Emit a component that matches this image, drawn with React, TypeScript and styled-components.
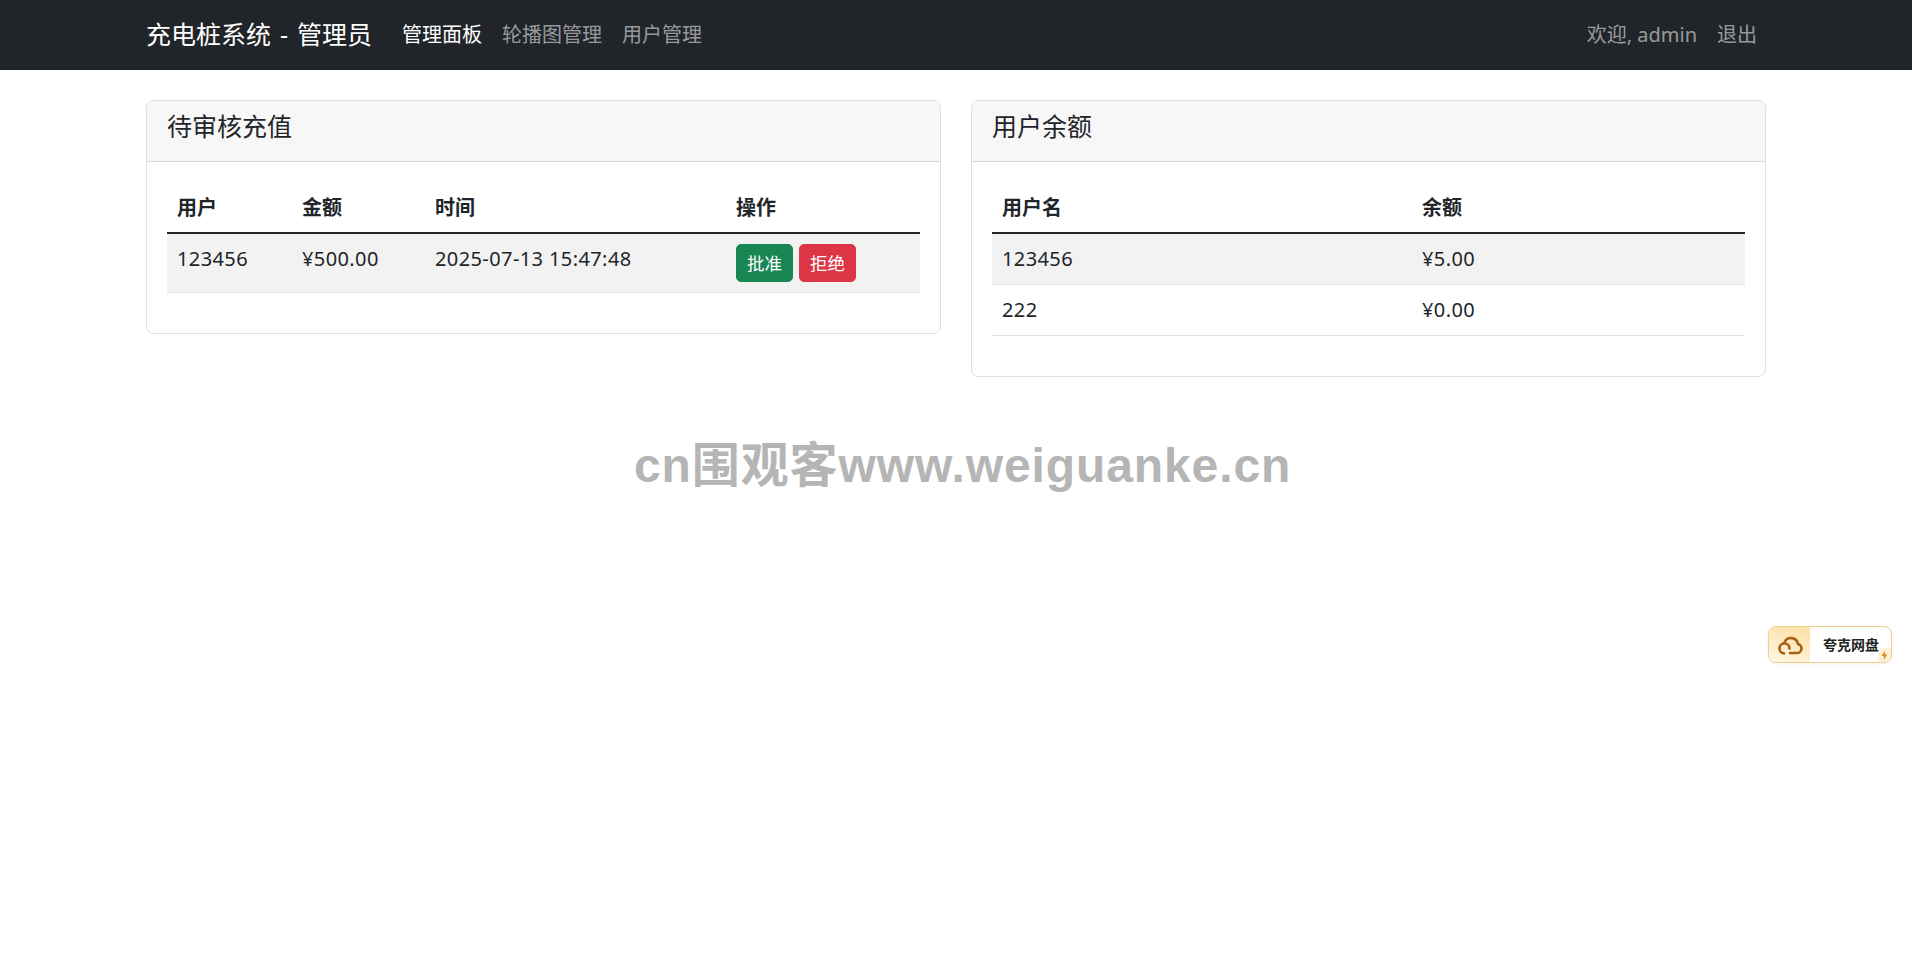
import React from 'react'
import styled, { createGlobalStyle } from 'styled-components'

const fontStack = `"Noto Sans", "Noto Sans CJK SC", sans-serif`

const GlobalStyle = createGlobalStyle`
  html, body {
    margin: 0;
    padding: 0;
    background: #fff;
  }
  body {
    font-family: ${fontStack};
    font-size: 20px;
    line-height: 1.5;
    color: #212529;
  }
`

const Navbar = styled.nav`
  background: #212529;
  height: 70px;
  box-sizing: border-box;
  padding: 10px 146px;
  display: flex;
  align-items: center;
`

const Brand = styled.a`
  font-size: 25px;
  line-height: 37.5px;
  color: #fff;
  margin-right: 20px;
  white-space: nowrap;
  word-spacing: 2.5px;
`

const NavList = styled.div<{ $right?: boolean }>`
  display: flex;
  margin-left: ${props => (props.$right ? 'auto' : '0')};
  margin-right: ${props => (props.$right ? '-1px' : '0')};
`

const NavLink = styled.a<{ $active?: boolean }>`
  padding: 10px;
  line-height: 30px;
  white-space: nowrap;
  color: ${props => (props.$active ? '#fff' : 'rgba(255, 255, 255, 0.55)')};
`

const Content = styled.main`
  padding: 30px 146px 0;
  display: grid;
  grid-template-columns: 795px 795px;
  gap: 30px;
  align-items: start;
`

const Card = styled.section`
  border: 1.25px solid rgba(0, 0, 0, 0.125);
  border-radius: 7.5px;
  overflow: hidden;
`

const CardHeader = styled.div`
  background: rgba(0, 0, 0, 0.03);
  border-bottom: 1.25px solid rgba(0, 0, 0, 0.125);
  padding: 10px 20px;
`

const CardTitle = styled.h5`
  margin: 0 0 10px;
  font-size: 25px;
  line-height: 30px;
  font-weight: 400;
`

const CardBody = styled.div`
  padding: 20px;
`

const Table = styled.table`
  width: 100%;
  table-layout: fixed;
  border-collapse: collapse;
  margin-bottom: 20px;
`

const HeadCell = styled.th`
  padding: 11px 10px 9px;
  text-align: left;
  font-weight: 700;
  line-height: 30px;
  border-bottom: 2.5px solid #212529;
`

const Row = styled.tr<{ $striped?: boolean }>`
  background: ${props => (props.$striped ? '#f2f2f2' : 'transparent')};
`

const Cell = styled.td`
  padding: 10px;
  line-height: 30px;
  vertical-align: top;
  letter-spacing: 0.4px;
  border-bottom: 1.25px solid #dee2e6;
`

const ButtonGroup = styled.div`
  display: flex;
  gap: 6px;
`

const SmallButton = styled.button<{ $tone: 'approve' | 'reject' }>`
  font-family: inherit;
  font-size: 17.5px;
  line-height: 26.25px;
  padding: 5px 10px;
  border-radius: 5px;
  color: #fff;
  border: 1.25px solid ${props => (props.$tone === 'approve' ? '#198754' : '#dc3545')};
  background: ${props => (props.$tone === 'approve' ? '#198754' : '#dc3545')};
`

const Watermark = styled.div`
  position: absolute;
  left: 634px;
  top: 436px;
  font-family: "Liberation Sans", "Noto Sans CJK SC", sans-serif;
  font-size: 48px;
  line-height: 60px;
  font-weight: 700;
  letter-spacing: 0.9px;
  color: #b5b5b5;
  white-space: nowrap;
`

const QuarkBadge = styled.div`
  position: absolute;
  left: 1768px;
  top: 626px;
  width: 124px;
  height: 37px;
  box-sizing: border-box;
  display: flex;
  border: 1px solid #f0cf8e;
  border-radius: 8px;
  background: #fff;
  box-shadow: 0 1px 3px rgba(0, 0, 0, 0.06);
  overflow: hidden;
`

const QuarkIcon = styled.div`
  width: 41px;
  display: flex;
  align-items: center;
  justify-content: center;
  background: linear-gradient(20deg, #fff4e0 10%, #fde2a8 90%);
`

const QuarkLabel = styled.span`
  margin-left: 13px;
  font-size: 14px;
  font-weight: 700;
  line-height: 35px;
  color: #222;
  white-space: nowrap;
`

const QuarkDot = styled.div`
  position: absolute;
  right: 0;
  bottom: 0;
  width: 13px;
  height: 14px;
  border-radius: 6px 0 0 0;
  background: #fdf0d6;
  display: flex;
  align-items: center;
  justify-content: center;
`

export default function App() {
  return (
    <>
      <GlobalStyle />
      <Navbar>
        <Brand>充电桩系统 - 管理员</Brand>
        <NavList>
          <NavLink $active>管理面板</NavLink>
          <NavLink>轮播图管理</NavLink>
          <NavLink>用户管理</NavLink>
        </NavList>
        <NavList $right>
          <NavLink>欢迎, admin</NavLink>
          <NavLink>退出</NavLink>
        </NavList>
      </Navbar>

      <Content>
        <Card>
          <CardHeader>
            <CardTitle>待审核充值</CardTitle>
          </CardHeader>
          <CardBody>
            <Table>
              <colgroup>
                <col width="125" />
                <col width="133" />
                <col width="301" />
                <col width="194" />
              </colgroup>
              <thead>
                <tr>
                  <HeadCell>用户</HeadCell>
                  <HeadCell>金额</HeadCell>
                  <HeadCell>时间</HeadCell>
                  <HeadCell>操作</HeadCell>
                </tr>
              </thead>
              <tbody>
                <Row $striped>
                  <Cell>123456</Cell>
                  <Cell>¥500.00</Cell>
                  <Cell>2025-07-13 15:47:48</Cell>
                  <Cell>
                    <ButtonGroup>
                      <SmallButton $tone="approve">批准</SmallButton>
                      <SmallButton $tone="reject">拒绝</SmallButton>
                    </ButtonGroup>
                  </Cell>
                </Row>
              </tbody>
            </Table>
          </CardBody>
        </Card>

        <Card>
          <CardHeader>
            <CardTitle>用户余额</CardTitle>
          </CardHeader>
          <CardBody>
            <Table>
              <colgroup>
                <col width="420" />
                <col width="333" />
              </colgroup>
              <thead>
                <tr>
                  <HeadCell>用户名</HeadCell>
                  <HeadCell>余额</HeadCell>
                </tr>
              </thead>
              <tbody>
                <Row $striped>
                  <Cell>123456</Cell>
                  <Cell>¥5.00</Cell>
                </Row>
                <Row>
                  <Cell>222</Cell>
                  <Cell>¥0.00</Cell>
                </Row>
              </tbody>
            </Table>
          </CardBody>
        </Card>
      </Content>

      <Watermark>cn围观客www.weiguanke.cn</Watermark>

      <QuarkBadge>
        <QuarkIcon>
          <svg width="26" height="20" viewBox="0 0 26 20" fill="none" stroke="#a9600f" strokeWidth="2.6" strokeLinecap="round" strokeLinejoin="round">
            <path d="M13 18H20a4.6 4.6 0 0 0 .9-9.1A7 7 0 0 0 7.6 7.2" />
            <path d="M12.5 13.5A5 5 0 1 0 7 18.4" />
          </svg>
        </QuarkIcon>
        <QuarkLabel>夸克网盘</QuarkLabel>
        <QuarkDot>
          <svg width="7" height="9" viewBox="0 0 7 9" fill="#d98a1a">
            <path d="M4 0 0.5 5H3L2.5 9 6.5 3.5H4Z" />
          </svg>
        </QuarkDot>
      </QuarkBadge>
    </>
  )
}
